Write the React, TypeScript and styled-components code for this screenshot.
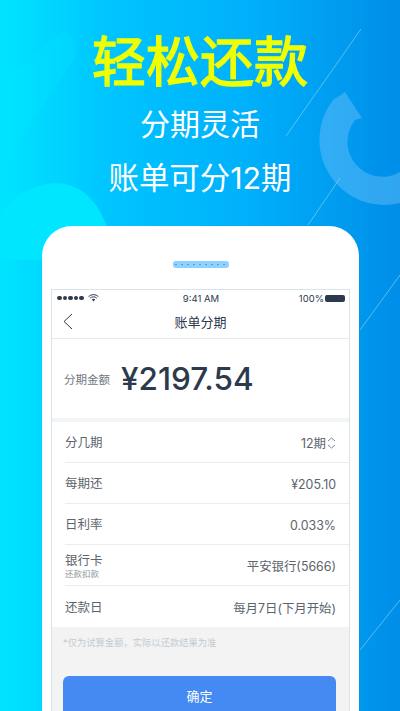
import styled, { createGlobalStyle } from 'styled-components';

const FONT = `Inter, "Noto Sans CJK SC", sans-serif`;

const rows = [
  { label: '分几期', value: '12期', picker: true },
  { label: '每期还', value: '¥205.10' },
  { label: '日利率', value: '0.033%' },
  { label: '银行卡', sub: '还款扣款', value: '平安银行(5666)' },
  { label: '还款日', value: '每月7日(下月开始)' },
];

const App = () => {
  return (
    <Page>
      <GlobalStyle />
      <Decor viewBox="0 0 400 711" aria-hidden="true">
        <path d="M60 33 C72 28 82 48 72 62 L0 170 L0 86 Z" fill="#00e6ff" opacity="0.3" />
        <path
          d="M0 215 C15 190 45 180 65 184 C85 188 100 205 108 230 L42 260 L0 260 Z"
          fill="#00e6ff"
        />
        <path
          d="M333 100 A65 65 0 0 0 400 203 L400 172 A35 35 0 0 1 355 120 L362 118 L345 92 Z"
          fill="#6cc0fa"
          opacity="0.45"
        />
        <path
          d="M361 29 L286 136 M340 178 L308 225 M400 275 L360 330 M400 600 L360 650"
          stroke="#8fd6fb"
          strokeWidth="1"
          opacity="0.6"
        />
      </Decor>

      <Title>轻松还款</Title>
      <Subtitle>分期灵活</Subtitle>
      <SecondLine>账单可分12期</SecondLine>

      <Phone>
        <Speaker />
        <Screen>
          <StatusBar>
            <Signal>
              <Dots>
                {[0, 1, 2, 3, 4].map((i) => (
                  <Dot key={i} />
                ))}
              </Dots>
              <svg width="11" height="8" viewBox="0 0 11 8" aria-hidden="true">
                <path
                  d="M0.6 2.6 A7 7 0 0 1 10.4 2.6 M2.2 4.2 A4.7 4.7 0 0 1 8.8 4.2"
                  fill="none"
                  stroke="#2d3a4d"
                  strokeWidth="1"
                />
                <path d="M3.8 5.6 A2.4 2.4 0 0 1 7.2 5.6 L5.5 7.6 Z" fill="#2d3a4d" />
              </svg>
            </Signal>
            <Clock>9:41 AM</Clock>
            <Power>
              100%
              <Battery />
            </Power>
          </StatusBar>

          <NavBar>
            <BackIcon width="10" height="17" viewBox="0 0 10 17" aria-hidden="true">
              <path d="M9 1 L1 8.5 L9 16" fill="none" stroke="#2d3a4d" strokeWidth="1" />
            </BackIcon>
            <NavTitle>账单分期</NavTitle>
          </NavBar>

          <AmountPanel>
            <AmountLabel>分期金额</AmountLabel>
            <Amount>¥2197.54</Amount>
          </AmountPanel>

          <RowList>
            {rows.map((row) => (
              <Row key={row.label}>
                <LabelBlock>
                  <RowLabel>{row.label}</RowLabel>
                  {row.sub && <RowSub>{row.sub}</RowSub>}
                </LabelBlock>
                <RowValue>
                  {row.value}
                  {row.picker && (
                    <svg width="9" height="12" viewBox="0 0 9 12" aria-hidden="true">
                      <path
                        d="M1 4 L4.5 1 L8 4 M1 8 L4.5 11 L8 8"
                        fill="none"
                        stroke="#6f7780"
                        strokeWidth="0.9"
                      />
                    </svg>
                  )}
                </RowValue>
              </Row>
            ))}
          </RowList>

          <Footer>
            <Note>*仅为试算金额，实际以还款结果为准</Note>
            <Confirm>确定</Confirm>
          </Footer>
        </Screen>
      </Phone>
    </Page>
  );
};

export default App;

const GlobalStyle = createGlobalStyle`
  html, body {
    margin: 0;
    padding: 0;
    height: 100%;
    overflow: hidden;
    font-family: ${FONT};
  }
`;

const Page = styled.div`
  position: relative;
  width: 400px;
  height: 711px;
  overflow: hidden;
  display: flex;
  flex-direction: column;
  align-items: center;
  background: linear-gradient(90deg, #00e4ff 0%, #00c4ff 28%, #00b0fb 62%, #008ee8 100%);
`;

const Decor = styled.svg`
  position: absolute;
  inset: 0;
  width: 400px;
  height: 711px;
`;

const Title = styled.h1`
  position: relative;
  margin: 28px 0 0;
  font-size: 54px;
  line-height: 70px;
  font-weight: 400;
  -webkit-text-stroke: 1.4px #f0ff00;
  color: #f0ff00;
`;

const Subtitle = styled.div`
  position: relative;
  margin-top: 4px;
  font-size: 30px;
  line-height: 44px;
  color: #ffffff;
`;

const SecondLine = styled(Subtitle)`
  margin-top: 10px;
  font-size: 30.4px;
`;

const Phone = styled.div`
  position: relative;
  box-sizing: border-box;
  width: 317px;
  height: 520px;
  margin-top: 26px;
  margin-left: 1px;
  padding: 35px 9px 0;
  display: flex;
  flex-direction: column;
  align-items: center;
  background: #ffffff;
  border-radius: 30px 30px 0 0;
`;

const Speaker = styled.div`
  width: 56px;
  height: 7px;
  margin-bottom: 21px;
  border-radius: 3px;
  background:
    radial-gradient(circle, #4a9fe0 0.5px, transparent 0.8px) 0 0 / 6px 7px,
    #8ed0ff;
`;

const Screen = styled.div`
  box-sizing: border-box;
  width: 100%;
  flex: 1;
  display: flex;
  flex-direction: column;
  border: 1px solid #d8e4ea;
  border-bottom: none;
  color: #2d3a4d;
`;

const StatusBar = styled.div`
  height: 14px;
  padding: 0 4px 0 5px;
  margin-top: 1px;
  display: grid;
  grid-template-columns: 1fr auto 1fr;
  align-items: center;
  font-size: 9.5px;
`;

const Signal = styled.div`
  display: flex;
  align-items: center;
  gap: 4px;
`;

const Dots = styled.div`
  display: flex;
  gap: 1px;
`;

const Dot = styled.span`
  width: 4.5px;
  height: 4.5px;
  border-radius: 50%;
  background: #2d3a4d;
`;

const Clock = styled.div`
  white-space: nowrap;
`;

const Power = styled.div`
  display: flex;
  justify-content: flex-end;
  align-items: center;
  gap: 1px;
`;

const Battery = styled.span`
  width: 20px;
  height: 7px;
  border-radius: 2px;
  background: #2d3a4d;
`;

const NavBar = styled.div`
  position: relative;
  height: 33px;
  display: flex;
  align-items: center;
  justify-content: center;
  border-bottom: 1px solid #e6eaee;
`;

const BackIcon = styled.svg`
  position: absolute;
  left: 11px;
  top: 8px;
`;

const NavTitle = styled.div`
  font-size: 13px;
`;

const AmountPanel = styled.div`
  box-sizing: border-box;
  height: 83px;
  padding: 0 12px;
  display: flex;
  align-items: center;
  gap: 11px;
  border-bottom: 4px solid #f3f4f5;
`;

const AmountLabel = styled.div`
  font-size: 11.5px;
  color: #6f7780;
`;

const Amount = styled.div`
  font-size: 31.5px;
  font-weight: 500;
  color: #2d3a4d;
`;

const RowList = styled.div`
  padding-left: 13px;
`;

const Row = styled.div`
  box-sizing: border-box;
  height: 41px;
  padding: 2px 13px 0 0;
  display: flex;
  align-items: center;
  justify-content: space-between;
  border-bottom: 1px solid #e9edf0;

  &:last-child {
    border-bottom: none;
  }
`;

const LabelBlock = styled.div`
  display: flex;
  flex-direction: column;
`;

const RowLabel = styled.div`
  font-size: 12.5px;
  line-height: 16px;
  color: #5c646d;
`;

const RowSub = styled.div`
  font-size: 8.5px;
  line-height: 10px;
  color: #8c939a;
`;

const RowValue = styled.div`
  display: flex;
  align-items: center;
  gap: 1px;
  font-size: 12.4px;
  color: #5c646d;
`;

const Footer = styled.div`
  flex: 1;
  padding: 9px 13px 0 11px;
  background: #f3f3f4;
`;

const Note = styled.div`
  font-size: 9.3px;
  line-height: 14px;
  color: #c3cbd0;
`;

const Confirm = styled.button`
  display: block;
  width: 100%;
  height: 60px;
  margin-top: 26px;
  padding: 0 0 22px;
  border: none;
  border-radius: 6px;
  background: #448af2;
  color: #ffffff;
  font-family: inherit;
  font-size: 13px;
`;
